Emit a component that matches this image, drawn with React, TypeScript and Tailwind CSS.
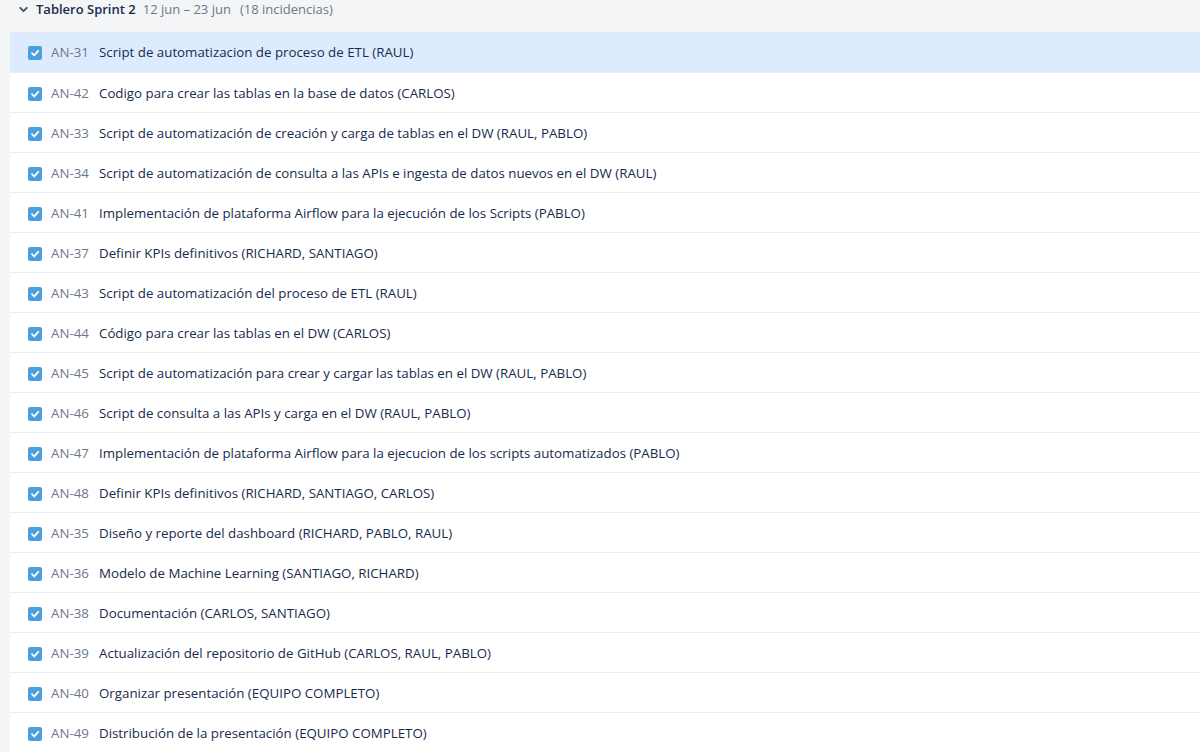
import { ChevronDown } from "lucide-react";

const issues = [
  ["AN-31", "Script de automatizacion de proceso de ETL (RAUL)"],
  ["AN-42", "Codigo para crear las tablas en la base de datos (CARLOS)"],
  ["AN-33", "Script de automatización de creación y carga de tablas en el DW (RAUL, PABLO)"],
  ["AN-34", "Script de automatización de consulta a las APIs e ingesta de datos nuevos en el DW (RAUL)"],
  ["AN-41", "Implementación de plataforma Airflow para la ejecución de los Scripts (PABLO)"],
  ["AN-37", "Definir KPIs definitivos (RICHARD, SANTIAGO)"],
  ["AN-43", "Script de automatización del proceso de ETL (RAUL)"],
  ["AN-44", "Código para crear las tablas en el DW (CARLOS)"],
  ["AN-45", "Script de automatización para crear y cargar las tablas en el DW (RAUL, PABLO)"],
  ["AN-46", "Script de consulta a las APIs y carga en el DW (RAUL, PABLO)"],
  ["AN-47", "Implementación de plataforma Airflow para la ejecucion de los scripts automatizados (PABLO)"],
  ["AN-48", "Definir KPIs definitivos (RICHARD, SANTIAGO, CARLOS)"],
  ["AN-35", "Diseño y reporte del dashboard (RICHARD, PABLO, RAUL)"],
  ["AN-36", "Modelo de Machine Learning (SANTIAGO, RICHARD)"],
  ["AN-38", "Documentación (CARLOS, SANTIAGO)"],
  ["AN-39", "Actualización del repositorio de GitHub (CARLOS, RAUL, PABLO)"],
  ["AN-40", "Organizar presentación (EQUIPO COMPLETO)"],
  ["AN-49", "Distribución de la presentación (EQUIPO COMPLETO)"],
];

function CheckIcon() {
  return (
    <span className="w-[14px] h-[14px] rounded-[2px] bg-[#4ba0dc] flex items-center justify-center shrink-0">
      <svg width="10" height="10" viewBox="0 0 10 10" fill="none">
        <path d="M2 5.2 L4.2 7.3 L8.2 2.8" stroke="white" strokeWidth="1.8" strokeLinecap="round" strokeLinejoin="round" />
      </svg>
    </span>
  );
}

export default function App() {
  return (
    <div className="w-[1200px] h-[752px] overflow-hidden bg-[#f4f5f7] font-['Open_Sans',sans-serif]">
      <div className="h-[32px] flex items-center pl-[17px] pb-[13px] text-[13px]">
        <ChevronDown size={13} strokeWidth={3.5} className="text-[#42526e] mr-[6px]" />
        <span className="font-semibold text-[#172b4d]">Tablero Sprint 2</span>
        <span className="text-[#6b778c] ml-[7px]">12 jun – 23 jun</span>
        <span className="text-[#6b778c] ml-[9px]">(18 incidencias)</span>
      </div>
      <div className="ml-[10px] bg-white">
        {issues.map(([key, summary], i) => (
          <div
            key={key}
            className={
              i === 0
                ? "h-[40px] flex items-center pl-[18px] pt-[2px] bg-[#deebff] text-[13.3px]"
                : "h-[40px] flex items-center pl-[18px] pt-[2px] border-t border-[#ebecf0] text-[13.3px]"
            }
          >
            <CheckIcon />
            <span className="ml-[9px] w-[40px] text-[#6b778c]">{key}</span>
            <span className="ml-[8px] text-[#172b4d]">{summary}</span>
          </div>
        ))}
      </div>
    </div>
  );
}
